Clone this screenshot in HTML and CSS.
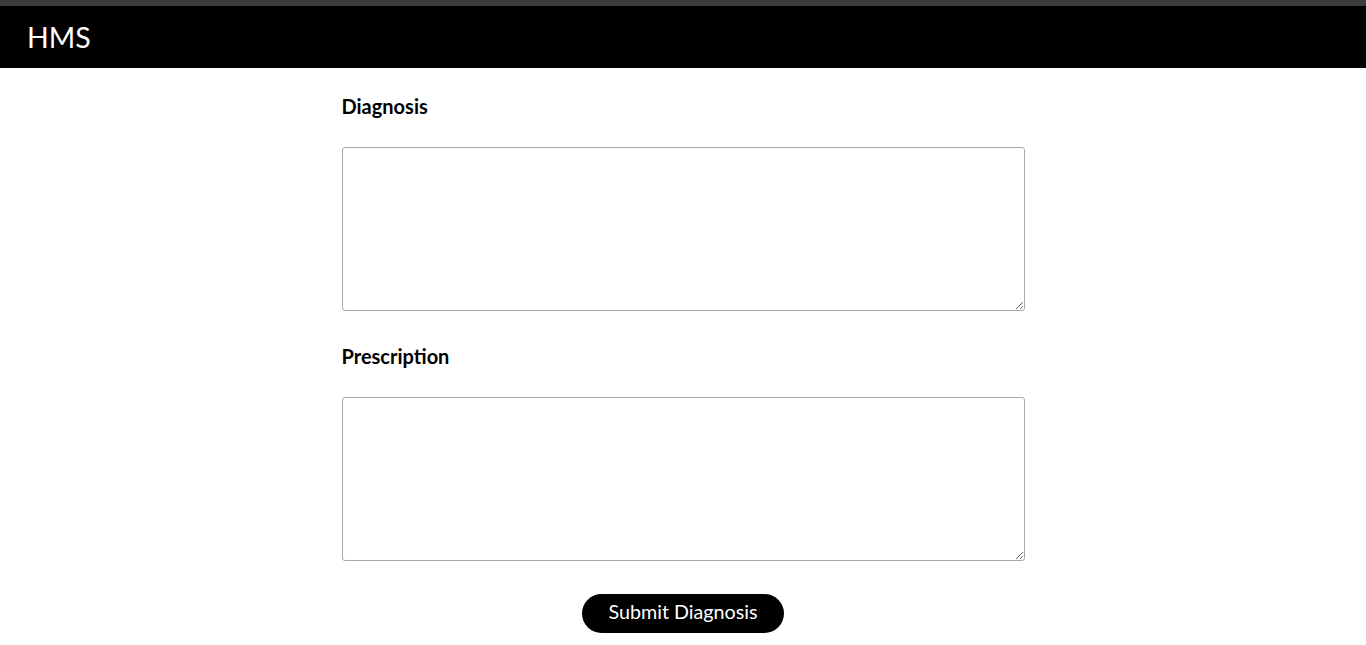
FILE: index.html
```html
<!DOCTYPE html>
<html>
<head>
<meta charset="utf-8">
<link rel="stylesheet" href="styles.css">
</head>
<body>
<div class="topstrip"></div>
<header class="header"><span class="brand">HMS</span></header>
<main class="form">
  <label class="label" for="diag">Diagnosis</label>
  <textarea id="diag" class="field"></textarea>
  <label class="label" for="pres">Prescription</label>
  <textarea id="pres" class="field"></textarea>
  <div class="actions"><button class="btn">Submit Diagnosis</button></div>
</main>
</body>
</html>
```
FILE: styles.css
```css
* { box-sizing: border-box; }
html, body { margin: 0; padding: 0; background: #fff; font-family: Lato, "Open Sans", sans-serif; }
.topstrip { height: 6px; background: #3c3c3c; }
.header { height: 62px; background: #000; display: flex; align-items: center; padding-left: 27px; }
.brand { color: #fff; font-size: 28.5px; line-height: 1; }
.form { width: 683px; margin: 0 auto; display: flex; flex-direction: column; padding-top: 26px; }
.label { font-weight: 700; font-size: 20px; line-height: 24px; color: #000; margin-bottom: 29px; }
.field { width: 100%; height: 164px; border: 1px solid #a9a9a9; border-radius: 3px; margin-bottom: 33px; resize: vertical; font-family: inherit; }
.actions { display: flex; justify-content: center; }
.btn { background: #000; color: #fff; border: none; border-radius: 20px; width: 202px; height: 39px; font-family: Lato, sans-serif; font-size: 19.7px; line-height: 24px; padding: 0 0 4px; }
```
